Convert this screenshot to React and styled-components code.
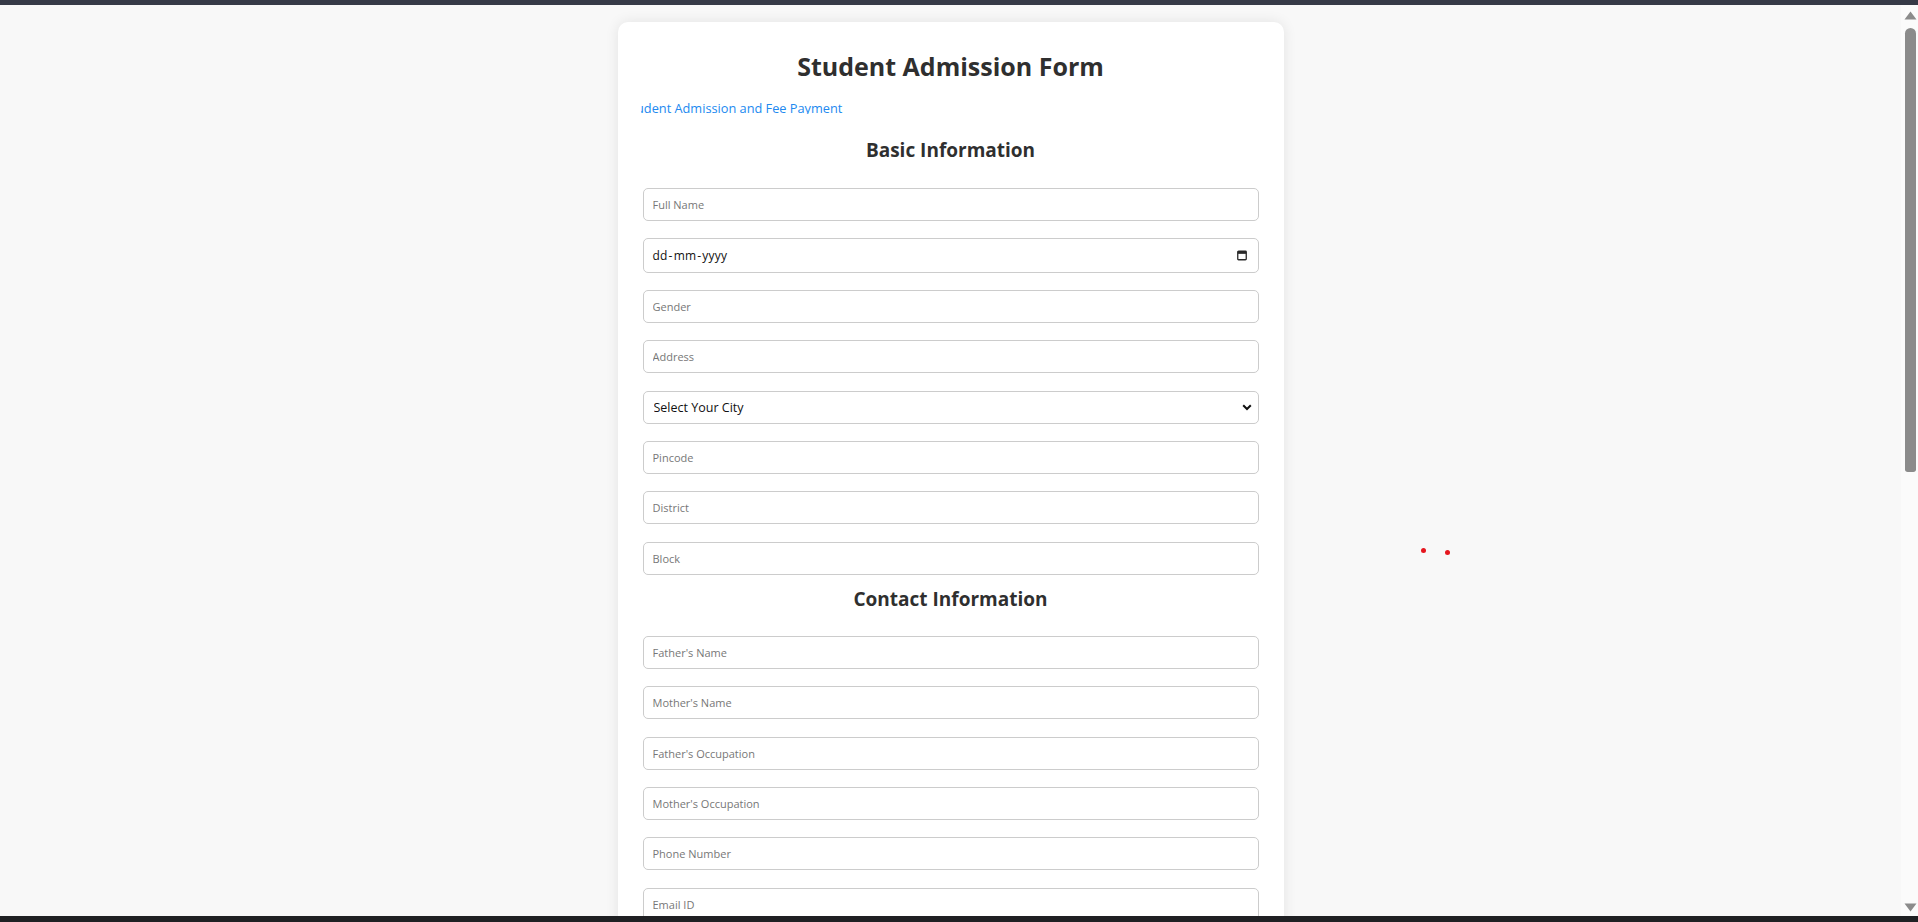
import React from "react";
import styled, { createGlobalStyle } from "styled-components";

const GlobalStyle = createGlobalStyle`
  html, body {
    margin: 0;
    padding: 0;
    height: 100%;
    overflow: hidden;
    background: #f8f8f8;
    font-family: "Open Sans", "Noto Sans", sans-serif;
  }
  #root { height: 100%; }
  * { box-sizing: border-box; }
`;

const Screen = styled.div`
  height: 100vh;
  display: flex;
  flex-direction: column;
`;

const TopStrip = styled.div`
  height: 5px;
  flex: none;
  background: #363a47;
`;

const BottomStrip = styled.div`
  height: 6px;
  flex: none;
  background: #1f2023;
`;

const Middle = styled.div`
  flex: 1;
  min-height: 0;
  display: flex;
`;

const Viewport = styled.div`
  flex: 1;
  min-width: 0;
  overflow: hidden;
  position: relative;
  background: #f8f8f8;
`;

const ScrollTrack = styled.div`
  width: 17px;
  flex: none;
  background: #fbfbfb;
  display: flex;
  flex-direction: column;
  align-items: center;
  padding: 6px 0 4px 1px;
`;

const Thumb = styled.div`
  width: 11px;
  height: 444px;
  margin-top: 8px;
  border-radius: 6px 6px 3px 3px;
  background: #8b8b8b;
`;

const Spacer = styled.div`
  flex: 1;
`;

const Card = styled.div`
  width: 666px;
  margin: 17px auto 0;
  background: #ffffff;
  border-radius: 10px;
  box-shadow: 0 0 14px rgba(0, 0, 0, 0.09);
  padding: 28px 25px 40px;
  display: flex;
  flex-direction: column;
`;

const Title = styled.h1`
  margin: 0;
  font-size: 25px;
  line-height: 32px;
  font-weight: 700;
  color: #2f2f2f;
  text-align: center;
`;

const Marquee = styled.div`
  margin: 13.5px 0 0 -2px;
  height: 18px;
  overflow: hidden;
  white-space: nowrap;
`;

const MarqueeText = styled.span`
  display: inline-block;
  margin-left: ${(p) => -p.$offset}px;
  font-size: 12.75px;
  line-height: 18px;
  color: #2189f0;
`;

const SectionTitle = styled.h2`
  margin: ${(p) => (p.$first ? "24.5px" : "12px")} 0 25.5px;
  font-size: 19px;
  line-height: 24px;
  font-weight: 700;
  color: #2f2f2f;
  text-align: center;
`;

const FieldList = styled.div`
  display: flex;
  flex-direction: column;
  gap: 17.3px;
`;

const TextInput = styled.input`
  width: 100%;
  height: 33px;
  border: 1px solid #cccccc;
  border-radius: 5px;
  padding: 0 9px;
  font-family: "Open Sans", "Noto Sans", sans-serif;
  font-size: 11px;
  color: #222;
  background: #fff;
  outline: none;
  &::placeholder {
    color: #777777;
  }
`;

const DateBox = styled.div`
  width: 100%;
  height: 35px;
  border: 1px solid #cccccc;
  border-radius: 5px;
  padding: 0 11px 0 9px;
  display: flex;
  align-items: center;
  justify-content: space-between;
  background: #fff;
`;

const DateText = styled.span`
  font-size: 12px;
  color: #111;
  letter-spacing: 0.2px;
`;

const DateSep = styled.span`
  padding: 0 1px;
`;

const SelectWrap = styled.div`
  display: grid;
  align-items: center;
  & > * {
    grid-area: 1 / 1;
  }
`;

const Select = styled.select`
  width: 100%;
  height: 33px;
  border: 1px solid #cccccc;
  border-radius: 5px;
  padding: 0 24px 0 10px;
  appearance: none;
  -webkit-appearance: none;
  background: #fff;
  font-family: "Open Sans", "Noto Sans", sans-serif;
  font-size: 12.5px;
  color: #111;
  outline: none;
`;

const Chevron = styled.svg`
  justify-self: end;
  margin-right: 7px;
  pointer-events: none;
`;

const Dot = styled.span`
  position: absolute;
  width: 5px;
  height: 5px;
  border-radius: 50%;
  background: #e5161e;
`;

const CalendarIcon = () => (
  <svg width="10" height="11" viewBox="0 0 10 11">
    <rect x="0.75" y="1.25" width="8.5" height="8.5" rx="0.8" fill="none" stroke="#2a2a2a" strokeWidth="1.3" />
    <rect x="0.75" y="1.25" width="8.5" height="2.6" fill="#2a2a2a" />
  </svg>
);

const ArrowUp = () => (
  <svg width="13" height="9" viewBox="0 0 13 9">
    <path d="M6.5 0.5 L12.5 8.5 L0.5 8.5 Z" fill="#8b8b8b" />
  </svg>
);

const ArrowDown = () => (
  <svg width="13" height="9" viewBox="0 0 13 9">
    <path d="M0.5 0.5 L12.5 0.5 L6.5 8.5 Z" fill="#8b8b8b" />
  </svg>
);

const basicBefore = ["Full Name"];
const basicAfter = ["Gender", "Address"];
const basicTail = ["Pincode", "District", "Block"];
const contact = [
  "Father's Name",
  "Mother's Name",
  "Father's Occupation",
  "Mother's Occupation",
  "Phone Number",
  "Email ID",
  "Alternate Phone Number",
];

export default function App() {
  return (
    <>
      <GlobalStyle />
      <Screen>
        <TopStrip />
        <Middle>
          <Viewport>
            <Card>
              <Title>Student Admission Form</Title>
              <Marquee>
                <MarqueeText $offset={16}>Student Admission and Fee Payment</MarqueeText>
              </Marquee>

              <SectionTitle $first>Basic Information</SectionTitle>
              <FieldList>
                {basicBefore.map((p) => (
                  <TextInput key={p} placeholder={p} />
                ))}
                <DateBox>
                  <DateText>
                    dd<DateSep>-</DateSep>mm<DateSep>-</DateSep>yyyy
                  </DateText>
                  <CalendarIcon />
                </DateBox>
                {basicAfter.map((p) => (
                  <TextInput key={p} placeholder={p} />
                ))}
                <SelectWrap>
                  <Select defaultValue="">
                    <option value="">Select Your City</option>
                    <option value="patna">Patna</option>
                    <option value="gaya">Gaya</option>
                  </Select>
                  <Chevron width="10" height="7" viewBox="0 0 10 7">
                    <polyline points="1.2,1.2 5,5 8.8,1.2" fill="none" stroke="#111" strokeWidth="2" />
                  </Chevron>
                </SelectWrap>
                {basicTail.map((p) => (
                  <TextInput key={p} placeholder={p} />
                ))}
              </FieldList>

              <SectionTitle>Contact Information</SectionTitle>
              <FieldList>
                {contact.map((p) => (
                  <TextInput key={p} placeholder={p} />
                ))}
              </FieldList>
            </Card>
            <Dot style={{ left: 1421, top: 543 }} />
            <Dot style={{ left: 1445, top: 545 }} />
          </Viewport>
          <ScrollTrack>
            <ArrowUp />
            <Thumb />
            <Spacer />
            <ArrowDown />
          </ScrollTrack>
        </Middle>
        <BottomStrip />
      </Screen>
    </>
  );
}
